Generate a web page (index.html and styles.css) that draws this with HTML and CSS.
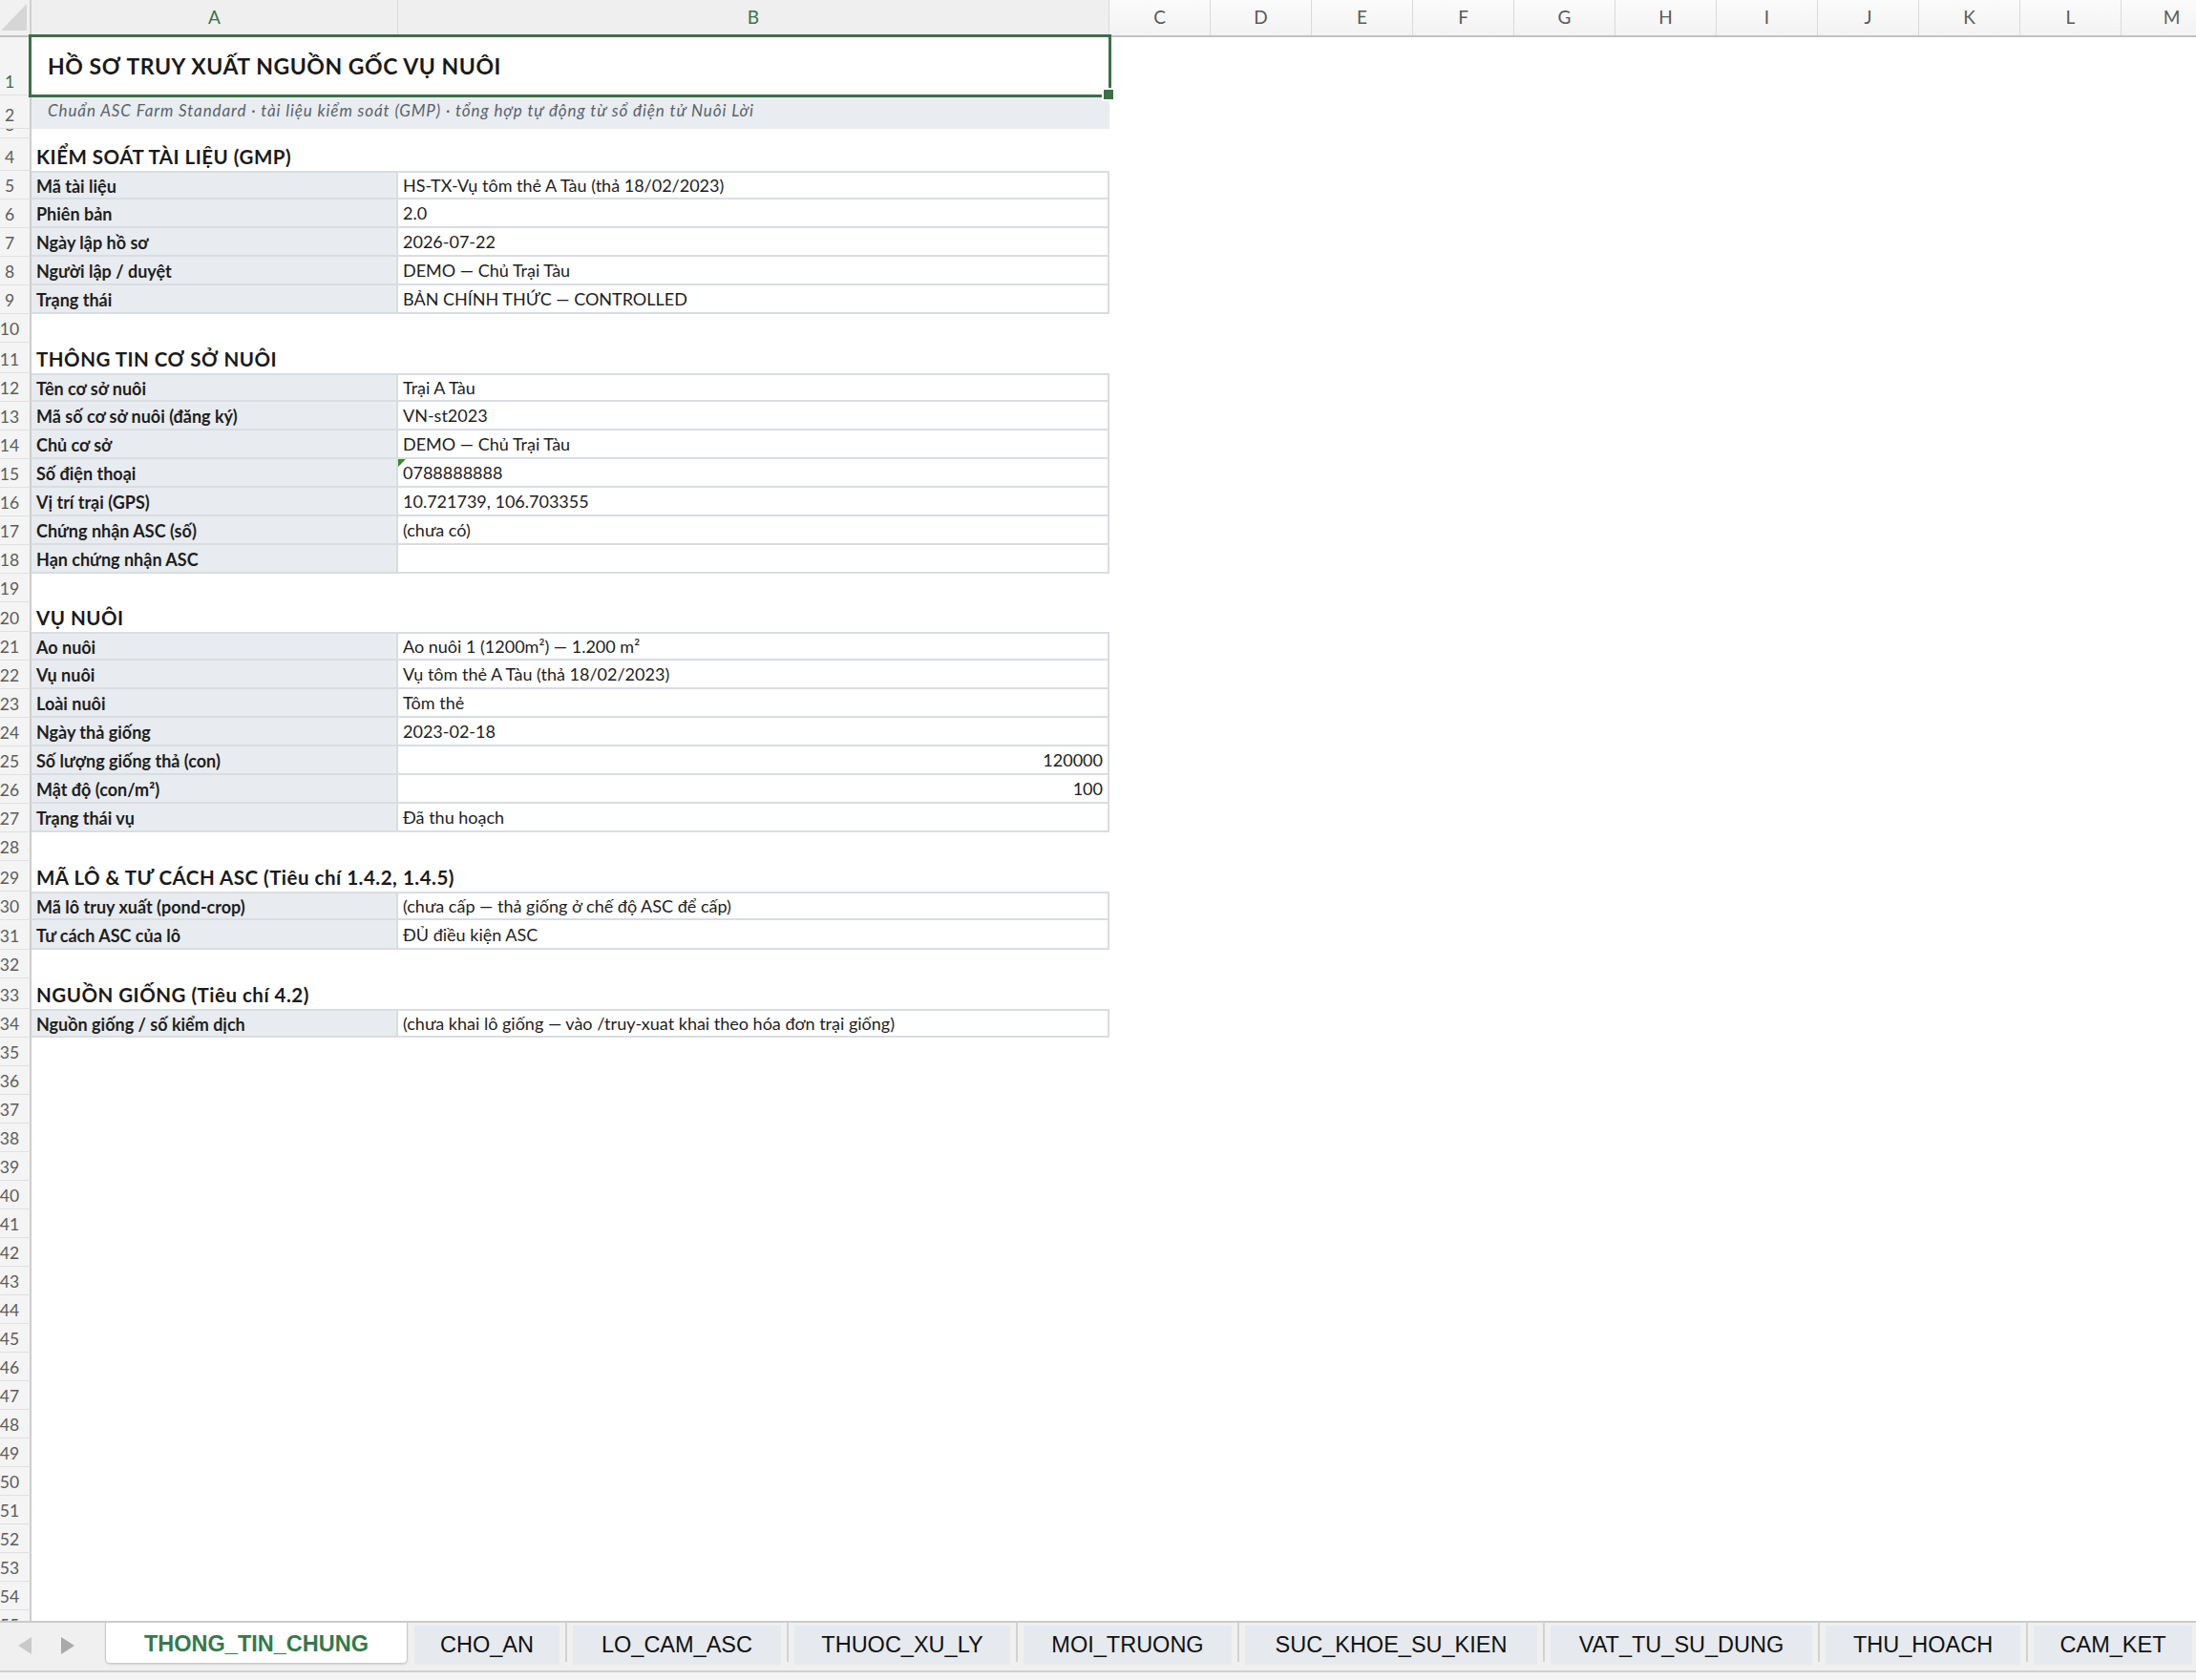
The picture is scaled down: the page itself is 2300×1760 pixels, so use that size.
FILE: index.html
```html
<!DOCTYPE html>
<html lang="vi">
<head>
<meta charset="utf-8">
<title>THONG_TIN_CHUNG</title>
<link rel="stylesheet" href="styles.css">
</head>
<body>
<div class="app">
  <div class="sheet">
    <div class="colhead">
      <div class="corner"><svg width="33" height="37" viewBox="0 0 33 37"><polygon points="28,4 28,32 1,32" fill="#d6d6d6"/></svg></div>
      <div class="ch sel-col col-a">A</div>
      <div class="ch sel-col col-b">B</div>
      <div class="ch">C</div><div class="ch">D</div><div class="ch">E</div><div class="ch">F</div>
      <div class="ch">G</div><div class="ch">H</div><div class="ch">I</div><div class="ch">J</div>
      <div class="ch">K</div><div class="ch">L</div><div class="ch">M</div>
    </div>

    <div class="row r-title"><div class="rh sel-row"><span class="n">1</span></div>
      <div class="cell merged title">HỒ SƠ TRUY XUẤT NGUỒN GỐC VỤ NUÔI<span class="selbox"></span><span class="handle"></span></div></div>
    <div class="row r-sub"><div class="rh"><span class="n">2</span></div>
      <div class="cell merged sub">Chuẩn ASC Farm Standard · tài liệu kiểm soát (GMP) · tổng hợp tự động từ sổ điện tử Nuôi Lời</div></div>
    <div class="row r-tiny"><div class="rh"><span class="n">3</span></div></div>

    <div class="row r-head h34"><div class="rh"><span class="n">4</span></div><div class="cell head">KIỂM SOÁT TÀI LIỆU (GMP)</div></div>
    <div class="row first"><div class="rh"><span class="n">5</span></div><div class="cell lab">Mã tài liệu</div><div class="cell val">HS-TX-Vụ tôm thẻ A Tàu (thả 18/02/2023)</div></div>
    <div class="row"><div class="rh"><span class="n">6</span></div><div class="cell lab">Phiên bản</div><div class="cell val">2.0</div></div>
    <div class="row"><div class="rh"><span class="n">7</span></div><div class="cell lab">Ngày lập hồ sơ</div><div class="cell val">2026-07-22</div></div>
    <div class="row"><div class="rh"><span class="n">8</span></div><div class="cell lab">Người lập / duyệt</div><div class="cell val">DEMO — Chủ Trại Tàu</div></div>
    <div class="row"><div class="rh"><span class="n">9</span></div><div class="cell lab">Trạng thái</div><div class="cell val">BẢN CHÍNH THỨC — CONTROLLED</div></div>
    <div class="row"><div class="rh"><span class="n">10</span></div></div>

    <div class="row r-head h32"><div class="rh"><span class="n">11</span></div><div class="cell head">THÔNG TIN CƠ SỞ NUÔI</div></div>
    <div class="row first"><div class="rh"><span class="n">12</span></div><div class="cell lab">Tên cơ sở nuôi</div><div class="cell val">Trại A Tàu</div></div>
    <div class="row"><div class="rh"><span class="n">13</span></div><div class="cell lab">Mã số cơ sở nuôi (đăng ký)</div><div class="cell val">VN-st2023</div></div>
    <div class="row"><div class="rh"><span class="n">14</span></div><div class="cell lab">Chủ cơ sở</div><div class="cell val">DEMO — Chủ Trại Tàu</div></div>
    <div class="row"><div class="rh"><span class="n">15</span></div><div class="cell lab">Số điện thoại</div><div class="cell val flagged">0788888888<span class="flag"></span></div></div>
    <div class="row"><div class="rh"><span class="n">16</span></div><div class="cell lab">Vị trí trại (GPS)</div><div class="cell val">10.721739, 106.703355</div></div>
    <div class="row"><div class="rh"><span class="n">17</span></div><div class="cell lab">Chứng nhận ASC (số)</div><div class="cell val">(chưa có)</div></div>
    <div class="row"><div class="rh"><span class="n">18</span></div><div class="cell lab">Hạn chứng nhận ASC</div><div class="cell val"></div></div>
    <div class="row"><div class="rh"><span class="n">19</span></div></div>

    <div class="row r-head h31"><div class="rh"><span class="n">20</span></div><div class="cell head">VỤ NUÔI</div></div>
    <div class="row first"><div class="rh"><span class="n">21</span></div><div class="cell lab">Ao nuôi</div><div class="cell val">Ao nuôi 1 (1200m²) — 1.200 m²</div></div>
    <div class="row"><div class="rh"><span class="n">22</span></div><div class="cell lab">Vụ nuôi</div><div class="cell val">Vụ tôm thẻ A Tàu (thả 18/02/2023)</div></div>
    <div class="row"><div class="rh"><span class="n">23</span></div><div class="cell lab">Loài nuôi</div><div class="cell val">Tôm thẻ</div></div>
    <div class="row"><div class="rh"><span class="n">24</span></div><div class="cell lab">Ngày thả giống</div><div class="cell val">2023-02-18</div></div>
    <div class="row"><div class="rh"><span class="n">25</span></div><div class="cell lab">Số lượng giống thả (con)</div><div class="cell val num">120000</div></div>
    <div class="row"><div class="rh"><span class="n">26</span></div><div class="cell lab">Mật độ (con/m²)</div><div class="cell val num">100</div></div>
    <div class="row"><div class="rh"><span class="n">27</span></div><div class="cell lab">Trạng thái vụ</div><div class="cell val">Đã thu hoạch</div></div>
    <div class="row"><div class="rh"><span class="n">28</span></div></div>

    <div class="row r-head h32"><div class="rh"><span class="n">29</span></div><div class="cell head">MÃ LÔ &amp; TƯ CÁCH ASC (Tiêu chí 1.4.2, 1.4.5)</div></div>
    <div class="row first"><div class="rh"><span class="n">30</span></div><div class="cell lab">Mã lô truy xuất (pond-crop)</div><div class="cell val">(chưa cấp — thả giống ở chế độ ASC để cấp)</div></div>
    <div class="row h31"><div class="rh"><span class="n">31</span></div><div class="cell lab">Tư cách ASC của lô</div><div class="cell val">ĐỦ điều kiện ASC</div></div>
    <div class="row"><div class="rh"><span class="n">32</span></div></div>

    <div class="row r-head h32"><div class="rh"><span class="n">33</span></div><div class="cell head">NGUỒN GIỐNG (Tiêu chí 4.2)</div></div>
    <div class="row first"><div class="rh"><span class="n">34</span></div><div class="cell lab">Nguồn giống / số kiểm dịch</div><div class="cell val">(chưa khai lô giống — vào /truy-xuat khai theo hóa đơn trại giống)</div></div>

    <div class="row"><div class="rh"><span class="n">35</span></div></div>
    <div class="row"><div class="rh"><span class="n">36</span></div></div>
    <div class="row"><div class="rh"><span class="n">37</span></div></div>
    <div class="row"><div class="rh"><span class="n">38</span></div></div>
    <div class="row"><div class="rh"><span class="n">39</span></div></div>
    <div class="row"><div class="rh"><span class="n">40</span></div></div>
    <div class="row"><div class="rh"><span class="n">41</span></div></div>
    <div class="row"><div class="rh"><span class="n">42</span></div></div>
    <div class="row"><div class="rh"><span class="n">43</span></div></div>
    <div class="row"><div class="rh"><span class="n">44</span></div></div>
    <div class="row"><div class="rh"><span class="n">45</span></div></div>
    <div class="row"><div class="rh"><span class="n">46</span></div></div>
    <div class="row"><div class="rh"><span class="n">47</span></div></div>
    <div class="row"><div class="rh"><span class="n">48</span></div></div>
    <div class="row"><div class="rh"><span class="n">49</span></div></div>
    <div class="row"><div class="rh"><span class="n">50</span></div></div>
    <div class="row"><div class="rh"><span class="n">51</span></div></div>
    <div class="row"><div class="rh"><span class="n">52</span></div></div>
    <div class="row"><div class="rh"><span class="n">53</span></div></div>
    <div class="row"><div class="rh"><span class="n">54</span></div></div>
    <div class="row"><div class="rh"><span class="n">55</span></div></div>
  </div>

  <div class="tabbar">
    <div class="nav">
      <svg class="arrow" width="110" height="48" viewBox="0 0 110 48">
        <polygon points="33,15 33,33 19,24" fill="#c9c9c9"/>
        <polygon points="64,15 64,33 78,24" fill="#a9a9a9"/>
      </svg>
    </div>
    <div class="tab active">THONG_TIN_CHUNG</div>
    <div class="tab t-cho">CHO_AN</div><span class="sep"></span>
    <div class="tab t-lo">LO_CAM_ASC</div><span class="sep"></span>
    <div class="tab t-thuoc">THUOC_XU_LY</div><span class="sep"></span>
    <div class="tab t-moi">MOI_TRUONG</div><span class="sep"></span>
    <div class="tab t-suc">SUC_KHOE_SU_KIEN</div><span class="sep"></span>
    <div class="tab t-vat">VAT_TU_SU_DUNG</div><span class="sep"></span>
    <div class="tab t-thu">THU_HOACH</div><span class="sep"></span>
    <div class="tab t-cam">CAM_KET</div>
  </div>
  <div class="status"></div>
</div>
</body>
</html>
```

FILE: styles.css
```css
* { box-sizing: border-box; margin: 0; padding: 0; }

html, body {
  width: 2300px;
  height: 1760px;
  overflow: hidden;
  background: #ffffff;
}

body {
  font-family: Lato, "Liberation Sans", sans-serif;
  color: #1e1e1e;
}

.app {
  display: flex;
  flex-direction: column;
  height: 1760px;
}

/* ---------- sheet ---------- */
.sheet {
  height: 1698px;
  flex: none;
  overflow: hidden;
}

.colhead {
  display: flex;
  height: 39px;
  border-bottom: 2px solid #c2c2c2;
  background: linear-gradient(#fbfbfb, #f3f3f3);
}

.corner {
  flex: none;
  width: 33px;
  background: #f1f1f1;
  border-right: 2px solid #cfcfcf;
}
.corner svg { display: block; }

.ch {
  flex: none;
  width: 106px;
  display: flex;
  align-items: center;
  justify-content: center;
  padding-bottom: 3px;
  font-size: 19px;
  color: #5a5a5a;
  border-right: 1px solid #dadada;
}
.ch.sel-col {
  background: #efefef;
  color: #3b7248;
}
.ch.col-a { width: 384px; }
.ch.col-b { width: 745px; }

.row {
  display: flex;
  height: 30px;
  flex: none;
}
.row.h31 { height: 31px; }
.row.h32 { height: 32px; }
.row.h34 { height: 34px; }
.row.r-title { height: 61px; }
.row.r-sub { height: 35px; }
.row.r-tiny { height: 10px; overflow: hidden; }

.rh {
  flex: none;
  width: 33px;
  display: flex;
  align-items: flex-end;
  padding-bottom: 3px;
  overflow: hidden;
  background: #f4f4f4;
  border-right: 2px solid #cccccc;
  border-bottom: 1px solid #e0e0e0;
}
.rh .n {
  flex: none;
  width: 20px;
  display: flex;
  justify-content: center;
  font-size: 17.5px;
  line-height: 20px;
  color: #5c5c5c;
  white-space: nowrap;
}
.rh.sel-row .n { color: #3b7248; }

.cell {
  flex: none;
  display: flex;
  align-items: center;
  white-space: nowrap;
  font-size: 18px;
  line-height: 20px;
}

.cell.merged {
  width: 1129px;
}

.cell.title {
  position: relative;
  padding-left: 17px;
  padding-bottom: 2px;
  font-size: 23px;
  letter-spacing: 0.55px;
  font-weight: 700;
  line-height: 26px;
  color: #1a1a1a;
}
.selbox {
  position: absolute;
  left: -3px;
  top: -3px;
  right: -2px;
  bottom: -2px;
  border: 3px solid #3b7046;
}
.handle {
  position: absolute;
  right: -6px;
  bottom: -6px;
  width: 14px;
  height: 14px;
  background: #3b7046;
  border: 2px solid #ffffff;
}

.cell.sub {
  padding-left: 17px;
  padding-bottom: 4px;
  background: #e9ecf0;
  font-size: 17px;
  letter-spacing: 0.9px;
  font-style: italic;
  color: #58626c;
}

.cell.head {
  width: 1129px;
  align-items: flex-end;
  padding-left: 5px;
  padding-bottom: 4px;
  font-size: 20.5px;
  letter-spacing: 0.5px;
  font-weight: 700;
  line-height: 22px;
  color: #1a1a1a;
}

.cell.lab,
.cell.val {
  border-bottom: 2px solid #d9dde2;
  border-right: 2px solid #d9dde2;
  padding-left: 5px;
}
.row.first .cell.lab,
.row.first .cell.val {
  border-top: 2px solid #d9dde2;
}

.cell.lab {
  width: 384px;
  padding-top: 2px;
  background: #e8ebef;
  font-weight: 700;
}
.cell.val {
  width: 745px;
  background: #ffffff;
}
.cell.val.num {
  justify-content: flex-end;
  padding-right: 5px;
}
.cell.flagged { position: relative; }
.flag {
  position: absolute;
  left: 0;
  top: 0;
  width: 0;
  height: 0;
  border-top: 8px solid #3a8a2e;
  border-right: 8px solid transparent;
}

/* ---------- sheet tabs ---------- */
.tabbar {
  flex: none;
  height: 52px;
  display: flex;
  align-items: flex-start;
  background: #f0f0f0;
  border-top: 2px solid #cbcbcb;
  font-family: "Liberation Sans", Arial, sans-serif;
  font-size: 23.5px;
  color: #111111;
  overflow: hidden;
}

.nav {
  flex: none;
  width: 110px;
  height: 48px;
}
.nav svg { display: block; }

.tab {
  flex: none;
  height: 41px;
  margin-top: 3px;
  display: flex;
  align-items: center;
  justify-content: center;
  white-space: nowrap;
  background: #e6e9ed;
}
.tab.t-cho { width: 152px; }
.tab.t-lo { width: 218px; }
.tab.t-thuoc { width: 226px; }
.tab.t-moi { width: 218px; }
.tab.t-suc { width: 306px; }
.tab.t-vat { width: 274px; }
.tab.t-thu { width: 204px; }
.tab.t-cam { width: 166px; }

.tab.active {
  margin-top: 0;
  height: 43px;
  width: 317px;
  padding-top: 3px;
  margin-right: 7px;
  background: #ffffff;
  color: #36794a;
  font-weight: 700;
  border: 1px solid #c9c9c9;
  border-top: none;
  border-radius: 0 0 5px 5px;
  box-shadow: 0 1px 2px rgba(0, 0, 0, 0.12);
}

.sep {
  flex: none;
  width: 2px;
  height: 41px;
  margin: 0 6px;
  background: #d2d2d2;
}

.status {
  flex: none;
  height: 10px;
  background: #f4f4f4;
  border-top: 2px solid #cfcfcf;
}
```
